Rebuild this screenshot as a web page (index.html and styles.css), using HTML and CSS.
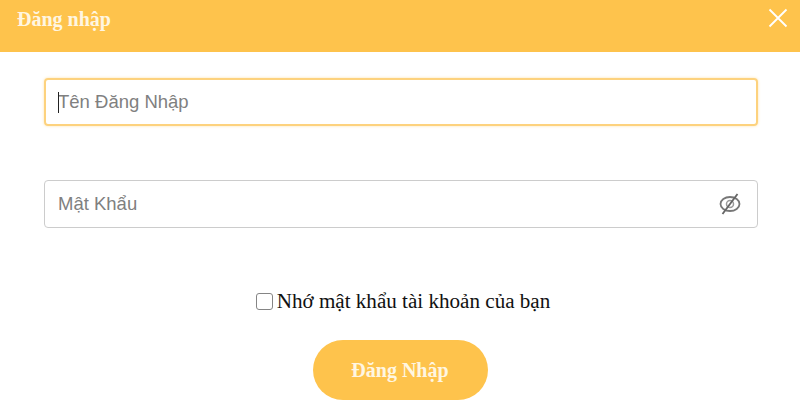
FILE: index.html
```html
<!DOCTYPE html>
<html lang="en">
	<head>
		<meta charset="utf-8">
		<title>Đăng nhập</title>
		<link rel="stylesheet" href="styles.css">
	</head>
	<body>
		<div class="header">
			<span class="header__title">Đăng nhập</span>
			<svg class="header__close" width="20" height="20" viewBox="0 0 20 20" aria-label="Đóng">
				<path d="M1.5 1.5 L18.5 18.5 M18.5 1.5 L1.5 18.5" fill="none" stroke="#fff" stroke-width="1.800"/>
			</svg>
		</div>

		<form class="login">
			<div class="field field--active">
				<input class="field__input" type="text" placeholder="Tên Đăng Nhập">
				<span class="field__caret"></span>
			</div>

			<div class="field">
				<input class="field__input" type="password" placeholder="Mật Khẩu">
				<svg class="field__eye" width="24" height="24" viewBox="0 0 24 24">
					<ellipse cx="12" cy="12" rx="9.500" ry="7" fill="none" stroke="#777" stroke-width="1.800"/>
					<circle cx="12" cy="12" r="3.500" fill="none" stroke="#999" stroke-width="1.500"/>
					<path d="M4.500 22 L19.500 2" fill="none" stroke="#666" stroke-width="1.800"/>
				</svg>
			</div>

			<label class="remember">
				<input class="remember__box" type="checkbox">
				<span>Nhớ mật khẩu tài khoản của bạn</span>
			</label>

			<button class="submit" type="button">Đăng Nhập</button>
		</form>
	</body>
</html>
```

FILE: styles.css
```css
html, body {
	height: 400px;
}

body {
	margin: 0;
	overflow: hidden;
	background: #fff;
	font-family: "Liberation Serif", serif;
}

.header {
	height: 52px;
	padding: 0 12px 0 17px;
	display: flex;
	align-items: flex-start;
	justify-content: space-between;
	background: #fec34c;
	color: #fff;
}

.header__title {
	margin-top: 8px;
	font-size: 20px;
	line-height: 22px;
	font-weight: bold;
	color: #fff6e2;
}

.header__close {
	margin-top: 8px;
}

.login {
	padding-top: 26px;
	display: flex;
	flex-direction: column;
}

.field {
	position: relative;
	height: 48px;
	margin: 0 42px 54px 44px;
	box-sizing: border-box;
	border: 1px solid #ccc;
	border-radius: 4px;
	display: flex;
	align-items: center;
	padding: 0 15px 0 13px;
}

.field--active {
	border: 2px solid #fdd27e;
	padding-left: 12px;
	box-shadow: 0 0 3px #fde3ae;
}

.field__input {
	flex: 1;
	min-width: 0;
	border: 0;
	outline: 0;
	padding: 0;
	background: transparent;
	font-family: "Liberation Sans", sans-serif;
	font-size: 18.500px;
	color: #333;
}

.field__input::placeholder {
	color: #808080;
	opacity: 1;
}

.field__caret {
	position: absolute;
	left: 12px;
	top: 12px;
	width: 1px;
	height: 21px;
	background: #222;
}

.field__eye {
	flex: none;
	margin-left: -1px;
}

.remember {
	margin: 8px 0 0 6px;
	align-self: center;
	display: flex;
	align-items: center;
	gap: 4px;
	font-size: 21.100px;
	line-height: 22px;
	color: #111;
}

.remember__box {
	margin: 0;
	width: 17px;
	height: 17px;
	appearance: none;
	box-sizing: border-box;
	border: 1.5px solid #858585;
	border-radius: 3px;
	background: #fff;
}

.submit {
	margin-top: 28px;
	align-self: center;
	width: 175px;
	height: 60px;
	border: 0;
	border-radius: 30px;
	background: #fec34c;
	color: #fff6e2;
	font-family: "Liberation Serif", serif;
	font-size: 20px;
	font-weight: bold;
}
```
